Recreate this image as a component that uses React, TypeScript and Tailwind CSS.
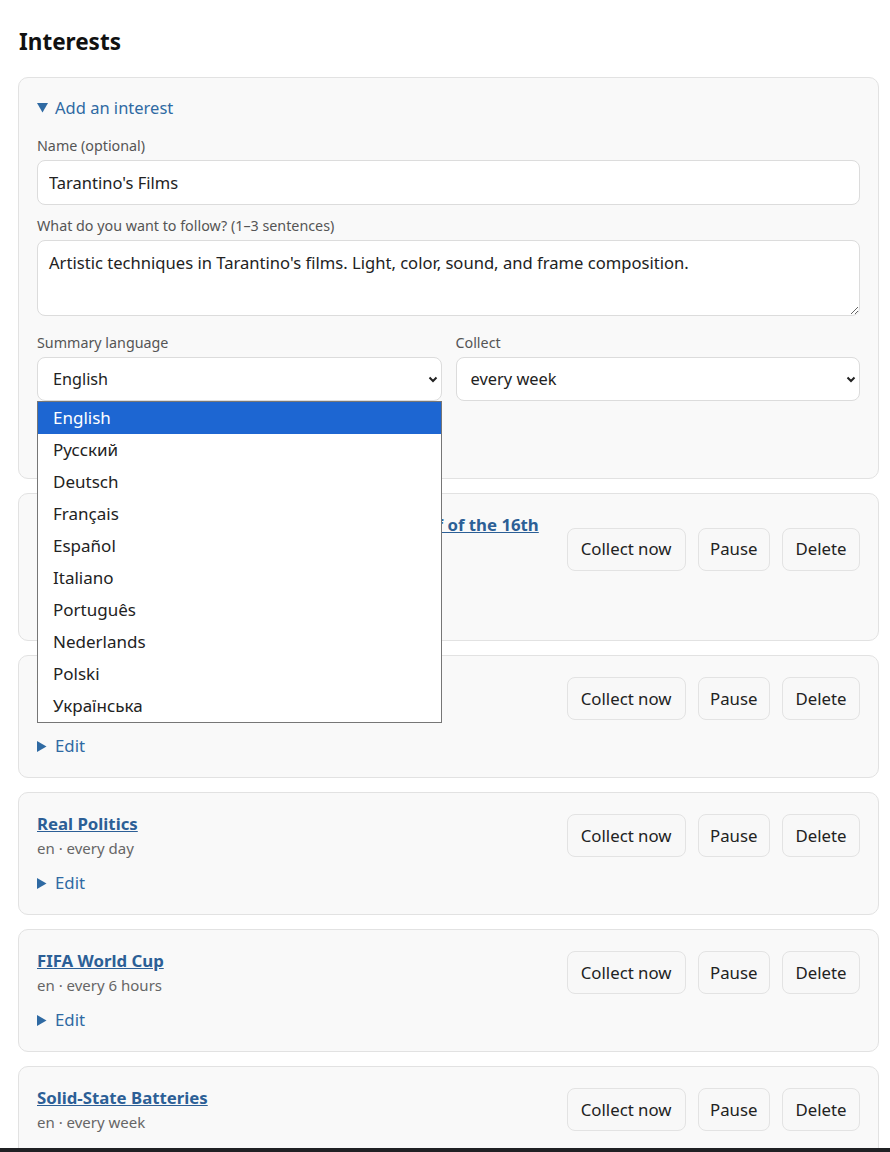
import { useState } from "react";

const languages = ["English", "Русский", "Deutsch", "Français", "Español", "Italiano", "Português", "Nederlands", "Polski", "Українська"];

const interests = [
  { id: 1, title: "Religion and Culture of Germany in the First Half of the 16th Century", meta: "en · every week" },
  { id: 2, title: "Tarantino's Films", meta: "en · every week" },
  { id: 3, title: "Real Politics", meta: "en · every day" },
  { id: 4, title: "FIFA World Cup", meta: "en · every 6 hours" },
  { id: 5, title: "Solid-State Batteries", meta: "en · every week" },
];

function Chevron() {
  return (
    <svg width="10" height="10" viewBox="0 0 10 10" className="pointer-events-none absolute right-[4px] top-1/2 -translate-y-1/2">
      <path d="M1.5 3.5 L5 7 L8.5 3.5" fill="none" stroke="#222" strokeWidth="2" />
    </svg>
  );
}

function Triangle({ down }: { down?: boolean }) {
  return down ? (
    <svg width="11" height="10" viewBox="0 0 11 10" className="mr-[7px]">
      <path d="M0 0 H11 L5.5 9.5 Z" fill="#2f6aa3" />
    </svg>
  ) : (
    <svg width="10" height="11" viewBox="0 0 10 11" className="mr-[8px]">
      <path d="M0 0 V11 L9.5 5.5 Z" fill="#2f6aa3" />
    </svg>
  );
}

function Btn({ children, pad = "px-[13px]" }: { children: string; pad?: string }) {
  return (
    <button className={`h-[43px] ${pad} rounded-[8px] border border-[#e3e3e3] bg-[#f8f8f8] text-[16.8px] text-[#222]`}>
      {children}
    </button>
  );
}

export default function App() {
  const [lang] = useState("English");

  return (
    <div className="min-h-screen bg-white pl-[18px] pr-[11px] pt-[26px] text-[#222]" style={{ fontFamily: '"Segoe UI", "Noto Sans", sans-serif' }}>
      <h2 className="pl-px text-[22.5px] font-bold leading-[32px] text-[#111] mb-[19px]">Interests</h2>

      <div className="rounded-[10px] border border-[#e2e2e2] bg-[#f9f9f9] px-[18px] pt-[18px] pb-[20px]">
        <div className="flex items-center text-[16.5px] leading-[24px] text-[#2f6aa3]">
          <Triangle down />
          Add an interest
        </div>

        <label className="block mt-[16px] mb-[4px] text-[14.3px] leading-[20px] text-[#555]">Name (optional)</label>
        <input
          className="block w-full h-[45px] rounded-[8px] border border-[#dcdcdc] bg-white px-[11px] text-[16.5px] text-[#222] outline-none"
          defaultValue="Tarantino's Films"
        />

        <label className="block mt-[11px] mb-[4px] text-[14.3px] leading-[20px] text-[#555]">What do you want to follow? (1–3 sentences)</label>
        <textarea
          className="block w-full h-[76px] rounded-[8px] border border-[#dcdcdc] bg-white px-[11px] py-[10px] text-[16.6px] leading-[24px] text-[#222] outline-none"
          defaultValue="Artistic techniques in Tarantino's films. Light, color, sound, and frame composition."
        />

        <div className="grid grid-cols-2 gap-[14px] mt-[17px]">
          <div className="relative">
            <label className="block mb-[4px] text-[14.3px] leading-[20px] text-[#555]">Summary language</label>
            <div className="relative">
              <div className="flex items-center h-[44px] rounded-[8px] border border-[#dcdcdc] bg-white pl-[15px] pt-px text-[16.2px] text-[#222]">{lang}</div>
              <Chevron />
            </div>
            <ul className="absolute left-0 right-0 top-[68px] z-10 border border-[#767676] bg-white text-[17px] text-[#222]">
              {languages.map((l, i) => (
                <li key={l} className={`h-[32px] flex items-center pl-[15px] ${i === 0 ? "bg-[#1d66d2] text-white" : ""}`}>
                  {l}
                </li>
              ))}
            </ul>
          </div>
          <div>
            <label className="block mb-[4px] text-[14.3px] leading-[20px] text-[#555]">Collect</label>
            <div className="relative">
              <div className="flex items-center h-[44px] rounded-[8px] border border-[#dcdcdc] bg-white pl-[14px] pt-px text-[16.4px] text-[#222]">every week</div>
              <Chevron />
            </div>
          </div>
        </div>

        <div className="mt-[14px]">
          <Btn>Add interest</Btn>
        </div>
      </div>

      <div className="flex flex-col gap-[14px] mt-[14px] pb-[40px]">
        {interests.map((it) => (
          <div key={it.id} className="rounded-[10px] border border-[#e2e2e2] bg-[#f9f9f9] px-[18px] pt-[18px] pb-[19px]">
            <div className="flex items-center justify-between gap-[20px]">
              <div className="min-w-0">
                <a href="#" className="text-[16.8px] leading-[25px] font-bold text-[#2c5f96] underline">
                  {it.title}
                </a>
                <div className="mt-px text-[15px] leading-[23px] text-[#666]">{it.meta}</div>
              </div>
              <div className="flex shrink-0 gap-[12px]">
                <Btn>Collect now</Btn>
                <Btn pad="px-[11.5px]">Pause</Btn>
                <Btn pad="px-[12.5px]">Delete</Btn>
              </div>
            </div>
            <div className="flex items-center mt-[11px] text-[16.8px] leading-[24px] text-[#2f6aa3]">
              <Triangle />
              Edit
            </div>
          </div>
        ))}
      </div>

      <div className="fixed bottom-0 left-0 right-0 h-[4px] bg-[#202124]" />
    </div>
  );
}
